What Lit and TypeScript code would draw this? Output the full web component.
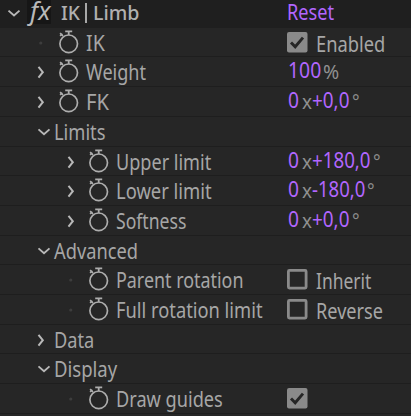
import { LitElement, html, svg, css, nothing } from "lit";
import { customElement, property } from "lit/decorators.js";

type Tone = "label" | "title" | "value" | "unit" | "degree" | "fx";

/** One run of text fitted to a condensed width. */
@customElement("fit-text")
class FitText extends LitElement {
  @property() text = "";
  @property({ type: Number }) width = 10;
  @property({ type: Number }) base = 22;
  @property() tone: Tone = "label";
  static styles = css`
    :host { display: block; flex: none; height: 29px; }
    svg { display: block; overflow: visible; }
    text { font-family: "Noto Sans", "Open Sans", sans-serif; font-size: 21.2px; fill: #a6a6a6; }
    .title { font-weight: 500; fill: #b0b0b0; font-size: 20.6px; }
    .value { fill: #b266ff; font-size: 21px; }
    .unit { fill: #909090; font-size: 20px; font-weight: 400; }
    .degree { fill: #8c8c8c; font-size: 20px; font-weight: 400; }
    .fx { fill: #b9b9b9; font-style: italic; font-size: 25.5px; font-weight: 400; }
  `;
  render() {
    return html`<svg width=${this.width} height="29">
      ${svg`<text class=${this.tone} x="0" y=${this.base} textLength=${this.width} lengthAdjust="spacingAndGlyphs">${this.text}</text>`}
    </svg>`;
  }
}

interface Run { text: string; width: number; gap?: number; base?: number; tone: Tone }
interface Row {
  label: string;
  width: number;
  twirl: "open" | "closed" | "none";
  level: 0 | 1;
  watch?: boolean;
  check?: boolean;
  runs?: Run[];
}

const angle = (value: string, width: number, gap: number): Run[] => [
  { text: "0", width: 11, gap: 0.5, base: 20.8, tone: "value" },
  { text: "x", width: 10, gap: 3, base: 22, tone: "unit" },
  { text: value, width, gap: 0.3, base: 20.8, tone: "value" },
  { text: "°", width: 7.6, gap, base: 22, tone: "degree" },
];

const rows: Row[] = [
  { label: "IK", width: 18.8, twirl: "none", level: 0, watch: true, check: true, runs: [{ text: "Enabled", width: 69.3, gap: 7.9, base: 23.6, tone: "label" }] },
  { label: "Weight", width: 60, twirl: "closed", level: 0, watch: true, runs: [{ text: "100", width: 33.2, gap: 0.5, base: 20.9, tone: "value" }, { text: "%", width: 16.2, gap: 2.4, base: 21.6, tone: "unit" }] },
  { label: "FK", width: 23, twirl: "closed", level: 0, watch: true, runs: angle("+0,0", 37.5, 2.8) },
  { label: "Limits", width: 51.5, twirl: "open", level: 0 },
  { label: "Upper limit", width: 95.2, twirl: "closed", level: 1, watch: true, runs: angle("+180,0", 58.6, 2.3) },
  { label: "Lower limit", width: 95.7, twirl: "closed", level: 1, watch: true, runs: angle("-180,0", 53.3, 1.8) },
  { label: "Softness", width: 70.3, twirl: "closed", level: 1, watch: true, runs: angle("+0,0", 37.5, 2.8) },
  { label: "Advanced", width: 84, twirl: "open", level: 0 },
  { label: "Parent rotation", width: 127.5, twirl: "none", level: 1, watch: true, check: false, runs: [{ text: "Inherit", width: 55.3, gap: 7.9, base: 23.6, tone: "label" }] },
  { label: "Full rotation limit", width: 146.5, twirl: "none", level: 1, watch: true, check: false, runs: [{ text: "Reverse", width: 67, gap: 7.9, base: 23.6, tone: "label" }] },
  { label: "Data", width: 40.3, twirl: "closed", level: 0 },
  { label: "Display", width: 63.2, twirl: "open", level: 0 },
  { label: "Draw guides", width: 106.8, twirl: "none", level: 1, watch: true, check: true },
];

@customElement("app-root")
class AppRoot extends LitElement {
  static styles = css`
    :host { display: block; width: 411px; height: 416px; overflow: hidden; background: #262626; }
    .header { display: flex; height: 27.8px; background: #1f1f1f; }
    .header .twirl { margin-left: 7px; }
    .badge { width: 24px; height: 24px; margin-left: 6px; background: #161616; padding-left: 2.5px; box-sizing: border-box; }
    .title { display: flex; margin-left: 9.6px; width: 226.9px; }
    .bar { width: 2px; height: 20px; margin: 3px 6.5px 0 5px; background: #a8a8a8; }
    .row { display: flex; height: 29.7px; box-sizing: border-box; border-bottom: 1px solid #1e1e1e; }
    .name { display: flex; width: 287px; box-sizing: border-box; padding-left: 37px; }
    .nested { padding-left: 67px; }
    .name fit-text { margin-left: 4.8px; }
    .group fit-text { margin-left: 3px; }
    .twirl { flex: none; width: 14px; height: 29px; }
    .watch { flex: none; width: 24px; height: 29px; margin-left: 6px; }
    .value { display: flex; }
    .box { flex: none; width: 21px; height: 21px; margin-top: 4px; }
    svg { display: block; overflow: visible; }
  `;

  twirl(kind: Row["twirl"]) {
    return html`<svg class="twirl" viewBox="0 0 14 29">
      ${kind === "open" ? svg`<path d="M1.5 12.4 7 17.2 12.5 12.4" fill="none" stroke="#b8b8b8" stroke-width="1.9"/>`
      : kind === "closed" ? svg`<path d="M1.5 9.8 5.8 15.2 1.5 20.6" fill="none" stroke="#b8b8b8" stroke-width="2"/>`
      : svg`<circle cx="3.8" cy="15" r="1.6" fill="#3d3d3d"/>`}
    </svg>`;
  }

  watch() {
    return html`<svg class="watch" viewBox="0 0 24 29">
      <circle cx="11.7" cy="15.8" r="8.8" fill="none" stroke="#adadad" stroke-width="1.7"/>
      <path d="M8.2 3.3h7M11.7 3.5v3.5" fill="none" stroke="#adadad" stroke-width="1.8"/>
      <path d="M3.1 5.1 6 8M3.1 7.9 5.4 5.9" fill="none" stroke="#adadad" stroke-width="1.7"/>
    </svg>`;
  }

  box(on: boolean) {
    return html`<svg class="box" viewBox="0 0 21 21">
      ${on ? svg`<rect x="0" y="0" width="20.5" height="20.5" rx="2" fill="#8a8a8a"/><path d="M4 10.5 8.2 14.8 16 5.6" fill="none" stroke="#262626" stroke-width="2.9"/>`
      : svg`<rect x="1.4" y="1.4" width="17.7" height="17.7" rx="1" fill="none" stroke="#8a8a8a" stroke-width="2.8"/>`}
    </svg>`;
  }

  row(r: Row) {
    return html`<div class="row">
      <div class="name ${r.level ? "nested" : ""} ${r.watch ? "" : "group"}">
        ${this.twirl(r.twirl)}
        ${r.watch ? this.watch() : nothing}
        <fit-text .text=${r.label} .width=${r.width} .base=${22.8}></fit-text>
      </div>
      <div class="value">
        ${r.check === undefined ? nothing : this.box(r.check)}
        ${(r.runs ?? []).map((t) => html`<fit-text style="margin-left:${t.gap ?? 0}px" .text=${t.text} .width=${t.width} .base=${t.base ?? 22} .tone=${t.tone}></fit-text>`)}
      </div>
    </div>`;
  }

  render() {
    return html`
      <div class="header">
        <svg class="twirl" viewBox="0 0 14 29"><path d="M1.5 10.6 7 15.4 12.5 10.6" fill="none" stroke="#b8b8b8" stroke-width="1.9"/></svg>
        <div class="badge"><fit-text .text=${"fx"} .width=${20.5} .base=${19.6} .tone=${"fx"}></fit-text></div>
        <div class="title">
          <fit-text .text=${"IK"} .width=${19} .base=${20.4} .tone=${"title"}></fit-text>
          <div class="bar"></div>
          <fit-text .text=${"Limb"} .width=${46.5} .base=${20.4} .tone=${"title"}></fit-text>
        </div>
        <fit-text .text=${"Reset"} .width=${47} .base=${20.4} .tone=${"value"}></fit-text>
      </div>
      ${rows.map((r) => this.row(r))}
    `;
  }
}
